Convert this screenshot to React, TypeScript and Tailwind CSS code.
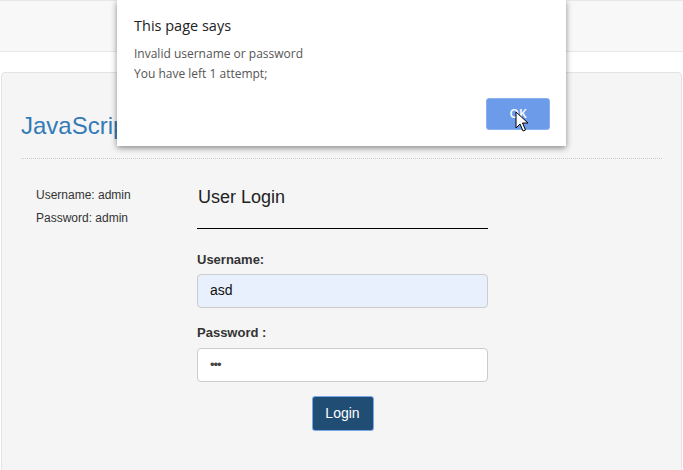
import React from "react";

const Cursor = () => (
  <svg width="14" height="22" viewBox="0 0 14 22" className="absolute left-[515px] top-[111px]">
    <path d="M1 1 L1 17 L5 13 L8 20 L10.5 19 L7.5 12 L13 12 Z" fill="#fff" stroke="#000" strokeWidth="1" strokeLinejoin="round" />
  </svg>
);

const AlertDialog = () => (
  <div className="absolute left-[117px] top-0 w-[449px] h-[146px] bg-white shadow-[0_2px_6px_rgba(0,0,0,0.45)] font-['Open_Sans',sans-serif]">
    <div className="pt-[15px] pl-[17px] text-[14.5px] text-[#222]">This page says</div>
    <div className="pl-[17px] mt-[7px] text-[12px] leading-[20px] text-[#555]">
      <p>Invalid username or password</p>
      <p>You have left 1 attempt;</p>
    </div>
    <div className="absolute left-[369px] top-[98px] w-[64px] h-[32px] rounded-[3px] bg-[#6b9be9] border border-[#8ab0ee] flex items-center justify-center text-white text-[12px] font-semibold">
      OK
    </div>
  </div>
);

export default function App() {
  return (
    <div className="relative w-[683px] h-[470px] overflow-hidden bg-white font-['Liberation_Sans',Arial,sans-serif]">
      <div className="h-[52px] bg-[#f8f8f8] border-y border-[#e7e7e7]" />
      <div className="mt-[20px] ml-[1px] mr-[1px] h-[420px] bg-[#f5f5f5] border border-[#e3e3e3] rounded-[4px] px-[19px] pt-[36px]">
        <h1 className="text-[24px] leading-[34px] text-[#337ab7]">JavaScript Login Form</h1>
        <div className="mt-[15px] border-t border-dotted border-[#ccc]" />
        <div className="flex mt-[25px]">
          <div className="w-[176px] pl-[15px] text-[12px] leading-[23px] text-[#333]">
            <p>Username: admin</p>
            <p>Password: admin</p>
          </div>
          <div className="w-[291px]">
            <h2 className="text-[18px] leading-[26px] text-[#222] pl-[1px]">User Login</h2>
            <div className="mt-[18px] border-t border-black" />
            <label className="block mt-[21px] text-[13px] font-bold text-[#333]">Username:</label>
            <div className="mt-[4px] h-[34px] rounded-[4px] border border-[#ccc] bg-[#e8f0fe] flex items-center px-[12px] text-[14px] text-[#111]">
              asd
            </div>
            <label className="block mt-[15px] text-[13px] font-bold text-[#333]">Password :</label>
            <div className="mt-[6px] h-[34px] rounded-[4px] border border-[#ccc] bg-white flex items-center px-[12px] text-[13px] text-[#444] tracking-[-1px]">
              •••
            </div>
            <div className="flex justify-center mt-[14px]">
              <button className="w-[62px] h-[35px] rounded-[3px] bg-[#204d74] border border-[#7aa7e8] text-white text-[14px]">
                Login
              </button>
            </div>
          </div>
        </div>
      </div>
      <AlertDialog />
      <Cursor />
    </div>
  );
}
